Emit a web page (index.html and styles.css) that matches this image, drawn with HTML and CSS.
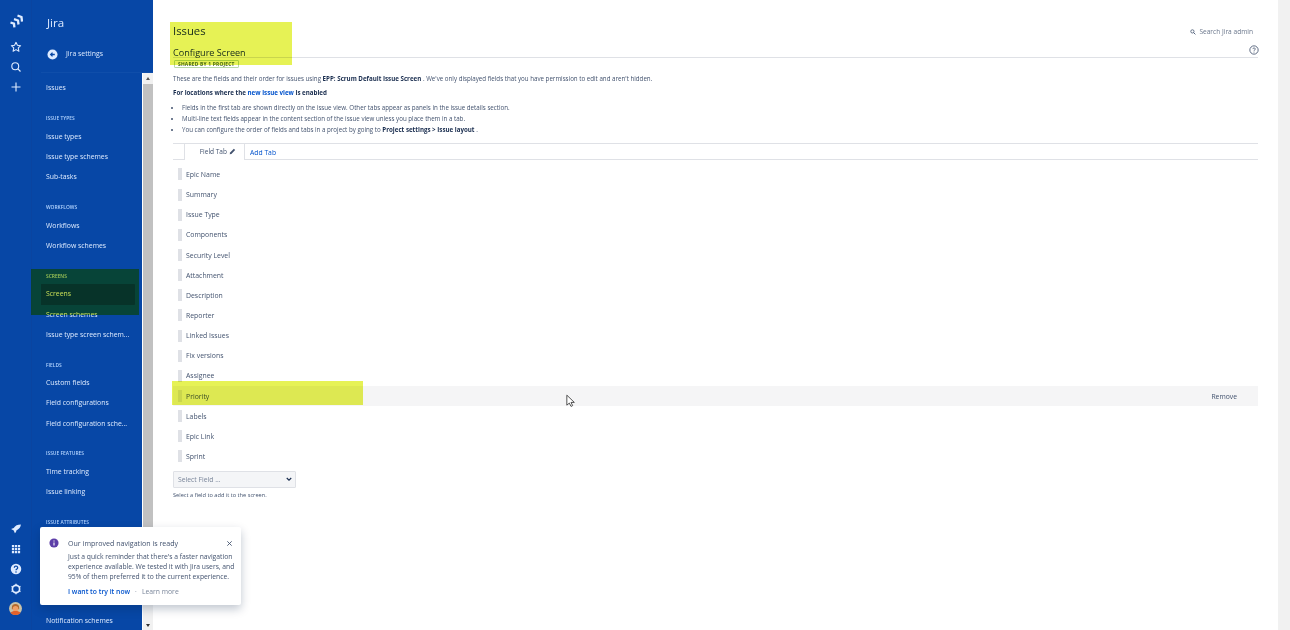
FILE: index.html
```html
<!DOCTYPE html>
<html lang="en">
<head>
<meta charset="utf-8">
<title>Configure Screen</title>
<link rel="stylesheet" href="styles.css">
</head>
<body>
<div class="app">
  <aside class="rail">
    <div class="rail-top">
      <svg class="logo" viewBox="0 0 14 14"><path d="M1.500 8.500l3.500 1.200.4 3.600M5 5.200l4 1.300.5 4M8.500 1.500l4 1.500.5 4.500" fill="none" stroke="#deebff" stroke-width="2.300"/></svg>
      <svg class="ri first" viewBox="0 0 16 16"><path d="M8 1.800l1.900 4 4.300.5-3.200 3 .9 4.400L8 11.500l-3.900 2.200.9-4.400-3.200-3 4.300-.5z" fill="none" stroke="#deebff" stroke-width="1.400" stroke-linejoin="round"/></svg>
      <svg class="ri" viewBox="0 0 16 16"><circle cx="7" cy="7" r="4.600" fill="none" stroke="#deebff" stroke-width="1.500"/><path d="M10.500 10.500l3.500 3.500" stroke="#deebff" stroke-width="1.600"/></svg>
      <svg class="ri" viewBox="0 0 16 16"><path d="M8 2v12M2 8h12" stroke="#deebff" stroke-width="1.500"/></svg>
    </div>
    <div class="rail-bottom">
      <svg class="ri" viewBox="0 0 16 16"><path d="M14.500 2C10 2 7 3.500 5 6.500L1.500 8 5 10l1.500 3.500 1.500-1.500.5-2c3.500-2 6-4.500 6-8z" fill="#deebff"/></svg>
      <svg class="ri" viewBox="0 0 16 16"><path d="M2.500 2.500h3v3h-3zM6.500 2.500h3v3h-3zM10.500 2.500h3v3h-3zM2.500 6.500h3v3h-3zM6.500 6.500h3v3h-3zM10.500 6.500h3v3h-3zM2.500 10.500h3v3h-3zM6.500 10.500h3v3h-3zM10.500 10.500h3v3h-3z" fill="#deebff"/></svg>
      <svg class="ri help-ic" viewBox="0 0 16 16"><circle cx="8" cy="8" r="7" fill="#deebff"/><path d="M5.800 6.300a2.200 2.200 0 1 1 3.400 1.800c-.8.500-1.200.8-1.200 1.700" fill="none" stroke="#0747a6" stroke-width="1.700"/><circle cx="8" cy="12" r="1" fill="#0747a6"/></svg>
      <svg class="ri" viewBox="0 0 16 16"><circle cx="8" cy="8" r="4.800" fill="none" stroke="#deebff" stroke-width="2.200"/><path d="M8 1v2.500M8 12.500V15M2 4.500l2 1.200M12 10.300l2 1.200M2 11.500l2-1.200M12 5.700l2-1.200" stroke="#deebff" stroke-width="1.800"/></svg>
      <svg class="avatar" viewBox="0 0 16 16"><circle cx="8" cy="8" r="8" fill="#c9c2a8"/><path d="M3.500 7a4.500 4.500 0 0 1 9 0v2h-9z" fill="#b56a2c"/><circle cx="8" cy="8.300" r="3.400" fill="#f0a066"/><path d="M1.800 13.500C3 11.500 5 11 8 11s5 .5 6.200 2.500A8 8 0 0 1 8 16a8 8 0 0 1-6.200-2.500z" fill="#e2622b"/></svg>
    </div>
  </aside>
  <div class="side">
    <div class="side-head">
      <div class="brand">Jira</div>
      <div class="back">
        <svg class="back-ic" viewBox="0 0 12 12"><circle cx="6" cy="6" r="5.500" fill="#deebff"/><path d="M8.500 6h-4M6 4L4 6l2 2" fill="none" stroke="#0747a6" stroke-width="1.400"/></svg>
        <span>Jira settings</span>
      </div>
    </div>
    <div class="side-body">
      <nav class="nav">
        <a class="item top">Issues</a>
        <h4>Issue types</h4>
        <a class="item">Issue types</a>
        <a class="item">Issue type schemes</a>
        <a class="item">Sub-tasks</a>
        <h4>Workflows</h4>
        <a class="item">Workflows</a>
        <a class="item">Workflow schemes</a>
        <h4>Screens</h4>
        <a class="item active">Screens</a>
        <a class="item">Screen schemes</a>
        <a class="item">Issue type screen schem...</a>
        <h4>Fields</h4>
        <a class="item">Custom fields</a>
        <a class="item">Field configurations</a>
        <a class="item">Field configuration sche...</a>
        <h4>Issue features</h4>
        <a class="item">Time tracking</a>
        <a class="item">Issue linking</a>
        <h4>Issue attributes</h4>
        <div class="nav-covered"></div>
        <a class="item">Notification schemes</a>
      </nav>
      <div class="sbar">
        <span class="sb-btn up"></span>
        <span class="sb-thumb"></span>
        <span class="sb-btn down"></span>
      </div>
    </div>
  </div>
  <main class="main">
    <div class="search"><svg class="search-ic" viewBox="0 0 10 10"><circle cx="4" cy="4" r="2.700" fill="none" stroke="#42526e" stroke-width="1.300"/><path d="M6 6l3 3" stroke="#42526e" stroke-width="1.500"/></svg>Search Jira admin</div>
    <h1>Issues</h1>
    <div class="title-row">
      <h2>Configure Screen</h2>
      <svg class="help" viewBox="0 0 12 12"><circle cx="6" cy="6" r="5" fill="none" stroke="#42526e" stroke-width="1"/><path d="M4.700 4.900A1.400 1.400 0 1 1 6.500 6.200c-.4.200-.5.400-.5.900" fill="none" stroke="#42526e" stroke-width=".9"/><circle cx="6" cy="8.500" r=".6" fill="#42526e"/></svg>
    </div>
    <span class="lozenge">SHARED BY 1 PROJECT</span>
    <p class="intro">These are the fields and their order for issues using <b>EPP: Scrum Default Issue Screen</b> . We've only displayed fields that you have permission to edit and aren't hidden.</p>
    <p class="loc"><b>For locations where the <a>new issue view</a> is enabled</b></p>
    <ul class="notes">
      <li>Fields in the first tab are shown directly on the issue view. Other tabs appear as panels in the issue details section.</li>
      <li>Multi-line text fields appear in the content section of the issue view unless you place them in a tab.</li>
      <li>You can configure the order of fields and tabs in a project by going to <b>Project settings &gt; Issue layout</b> .</li>
    </ul>
    <div class="tabs">
      <div class="tab">Field Tab<svg class="pencil" viewBox="0 0 10 10"><path d="M1 9l.6-2.400L7 1.200 8.800 3 3.400 8.400z" fill="#42526e"/></svg></div>
      <a class="add-tab">Add Tab</a>
    </div>
    <ul class="fields">
      <li class="field"><i></i>Epic Name</li>
      <li class="field"><i></i>Summary</li>
      <li class="field"><i></i>Issue Type</li>
      <li class="field"><i></i>Components</li>
      <li class="field"><i></i>Security Level</li>
      <li class="field"><i></i>Attachment</li>
      <li class="field"><i></i>Description</li>
      <li class="field"><i></i>Reporter</li>
      <li class="field"><i></i>Linked Issues</li>
      <li class="field"><i></i>Fix versions</li>
      <li class="field"><i></i>Assignee</li>
      <li class="field hover"><i></i>Priority<span class="remove">Remove</span></li>
      <li class="field"><i></i>Labels</li>
      <li class="field"><i></i>Epic Link</li>
      <li class="field"><i></i>Sprint</li>
    </ul>
    <div class="select"><span>Select Field ...</span><svg class="chev" viewBox="0 0 8 6"><path d="M1 1l3 3 3-3" fill="none" stroke="#172b4d" stroke-width="1.500"/></svg></div>
    <p class="hint">Select a field to add it to the screen.</p>
  </main>
  <div class="pagebar"></div>
</div>

<div class="mark mark-head"></div>
<div class="mark mark-nav"></div>
<div class="mark mark-row"></div>

<svg class="cursor" viewBox="0 0 12 16"><path d="M1 1v12l3-2.500 2 4 2-1-2-3.800h4z" fill="#fff" stroke="#333" stroke-width="1"/></svg>

<aside class="toast">
  <svg class="toast-ic" viewBox="0 0 12 12"><circle cx="6" cy="6" r="5.500" fill="#5e3fa8"/><path d="M6 3v1.200M6 5.300V9" stroke="#fff" stroke-width="1.300"/></svg>
  <div class="toast-body">
    <div class="toast-head">
      <span>Our improved navigation is ready</span>
      <svg class="toast-x" viewBox="0 0 8 8"><path d="M1.500 1.500l5 5M6.500 1.500l-5 5" stroke="#42526e" stroke-width="1"/></svg>
    </div>
    <p>Just a quick reminder that there's a faster navigation experience available. We tested it with Jira users, and 95% of them preferred it to the current experience.</p>
    <div class="toast-links"><a class="try">I want to try it now</a><span class="sep">·</span><a class="more">Learn more</a></div>
  </div>
</aside>
</body>
</html>
```
FILE: styles.css
```css
* { box-sizing: border-box; }
html, body { margin: 0; height: 100%; overflow: hidden; background: #fff; }
body { font-family: "Open Sans", "Liberation Sans", sans-serif; font-size: 6.6px; color: #42526e; }
a { text-decoration: none; }
h1, h2, h4, p, ul { margin: 0; padding: 0; }
ul { list-style: none; }

.app { display: flex; height: 630px; }

.rail { width: 31px; background: #0747a6; display: flex; flex-direction: column; justify-content: space-between; align-items: center; padding: 14px 0 15px; flex: none; }
.rail-top, .rail-bottom { display: flex; flex-direction: column; align-items: center; }
.logo { width: 14px; height: 14px; }
.ri { width: 12px; height: 12px; margin-top: 8px; display: block; }
.rail-top .ri.first { margin-top: 13px; }
.rail-bottom .ri:first-child { margin-top: 0; }
.avatar { width: 13px; height: 13px; margin-top: 7px; display: block; }

.side { width: 122px; background: #0747a6; color: #deebff; display: flex; flex-direction: column; flex: none; border-left: 1px solid #0a44a0; }
.side-head { height: 72px; padding: 15px 0 0 15px; flex: none; }
.brand { font-size: 11.5px; line-height: 15px; margin-bottom: 18px; }
.back { display: flex; align-items: center; gap: 8px; font-size: 6.9px; line-height: 12px; font-weight: 500; }
.back-ic { width: 11px; height: 11px; flex: none; }
.side-body { flex: 1; min-height: 0; display: flex; border-top: 1px solid #0f4eaa; margin-left: 9px; }
.nav { flex: 1; padding: 0 8px 0 5px; overflow: hidden; }
.item { display: block; line-height: 20.2px; height: 20.2px; font-size: 6.85px; white-space: nowrap; color: #deebff; font-weight: 500; }
.item.top { margin-top: 4.5px; }
.item.active { background: rgba(9, 30, 66, .45); margin: 0 -1px 0 -6px; padding-left: 6px; border-radius: 1px; }
.nav h4 { font-size: 4.9px; font-weight: 600; text-transform: uppercase; color: #b3d4ff; line-height: 8px; margin-top: 15.7px; padding-bottom: 4.6px; }
.nav .item.top + h4 { margin-top: 16.6px; }
.nav-covered { height: 80.4px; }
.sbar { width: 11px; background: #f1f1f1; border-left: 1px solid #fff; display: flex; flex-direction: column; flex: none; }
.sb-btn { height: 11px; flex: none; position: relative; }
.sb-btn::after { content: ""; position: absolute; left: 3px; border-left: 2.5px solid transparent; border-right: 2.5px solid transparent; }
.sb-btn.up::after { top: 4px; border-bottom: 3px solid #555; }
.sb-btn.down::after { bottom: 3px; border-top: 3px solid #333; }
.sb-thumb { height: 455px; background: #c1c1c1; }
.sbar .sb-btn.down { margin-top: auto; }

.main { flex: 1; padding: 0 20px; min-width: 0; }
.search { display: flex; justify-content: flex-end; align-items: center; gap: 3px; font-size: 6.6px; line-height: 10px; padding-top: 27px; margin-right: 5px; color: #6b778c; }
.search-ic { width: 6px; height: 6px; }
h1 { font-size: 11.3px; font-weight: 500; color: #172b4d; line-height: 16px; margin-top: -14px; }
.title-row { display: flex; align-items: flex-end; justify-content: space-between; margin-top: 7px; border-bottom: 1px solid #dfe1e6; height: 12px; }
h2 { font-size: 9.1px; font-weight: 500; color: #172b4d; line-height: 12px; margin-bottom: -2px; white-space: nowrap; }
.help { width: 10px; height: 10px; margin: 0 -1px 2px 0; }
.lozenge { display: inline-block; margin: 2px 0 0 1px; font-size: 4.9px; font-weight: 700; line-height: 6px; padding: 0 3px; color: #4a6b2a; border: 1px solid #b9d9a8; border-radius: 1px; letter-spacing: .2px; vertical-align: top; }
.intro { line-height: 10px; margin-top: 6px; font-size: 6.2px; }
.loc { line-height: 10px; margin-top: 4px; font-size: 6.2px; color: #172b4d; }
b { color: #172b4d; font-weight: 700; }
.loc a { color: #0052cc; }
.notes { margin-top: 4px; padding-left: 9px; list-style: disc; font-size: 6.2px; }
.notes li { line-height: 11px; }
.notes li::marker { font-size: 6px; }

.tabs { display: flex; align-items: flex-end; height: 17px; margin-top: 8px; border-top: 1px solid #dfe1e6; border-bottom: 1px solid #dfe1e6; padding-left: 11px; }
.tab { width: 61px; height: 16px; margin-bottom: -1px; border-left: 1px solid #dfe1e6; border-right: 1px solid #dfe1e6; background: #fff; display: flex; align-items: center; justify-content: flex-end; padding-right: 8px; gap: 2px; padding-bottom: 2px; font-size: 6.55px; }
.pencil { width: 7px; height: 7px; }
.add-tab { margin-left: 5px; color: #0052cc; font-size: 6.8px; line-height: 13px; }

.fields { margin-top: 4.4px; }
.field { display: flex; align-items: center; height: 20.15px; font-size: 6.9px; padding-left: 5px; }
.field i { width: 4px; height: 12px; background: #dfe1e6; margin-right: 4px; flex: none; }
.field.hover { background: #f5f5f6; }
.remove { margin-left: auto; margin-right: 21px; font-size: 6.8px; }

.select { width: 123px; height: 17px; margin-top: 4px; background: #f4f5f7; border: 1px solid #dfe1e6; border-radius: 1px; display: flex; align-items: center; justify-content: space-between; padding: 0 3px 0 4px; font-size: 6.8px; color: #7a869a; }
.chev { width: 6px; height: 5px; }
.hint { margin-top: 3px; font-size: 5.65px; line-height: 8px; }

.pagebar { width: 12px; background: #f1f1f1; flex: none; }

.mark { position: absolute; background: #e6f255; mix-blend-mode: multiply; }
.mark-head { left: 170px; top: 22px; width: 122px; height: 43px; }
.mark-nav { left: 31px; top: 269px; width: 108px; height: 46px; }
.mark-row { left: 172px; top: 381px; width: 191px; height: 24px; }

.cursor { position: absolute; left: 566px; top: 394px; width: 10px; height: 14px; }

.toast { position: absolute; left: 40px; top: 527px; width: 201px; height: 78px; background: #fff; box-shadow: 0 4px 10px rgba(9, 30, 66, .25); padding: 11px 4px 0 9px; display: flex; gap: 9px; border-radius: 2px; color: #42526e; }
.toast-ic { width: 10px; height: 10px; flex: none; }
.toast-body { flex: 1; min-width: 0; }
.toast-head { display: flex; align-items: center; justify-content: space-between; font-size: 7.1px; line-height: 10px; }
.toast p { font-size: 6.75px; line-height: 10px; margin-top: 3.5px; }
.toast-links { font-size: 6.8px; line-height: 10px; margin-top: 5px; display: flex; gap: 5px; }
.try { color: #0052cc; font-weight: 600; }
.sep, .more { color: #7a869a; }
.toast-x { width: 7px; height: 7px; flex: none; margin-right: 4px; }
```
